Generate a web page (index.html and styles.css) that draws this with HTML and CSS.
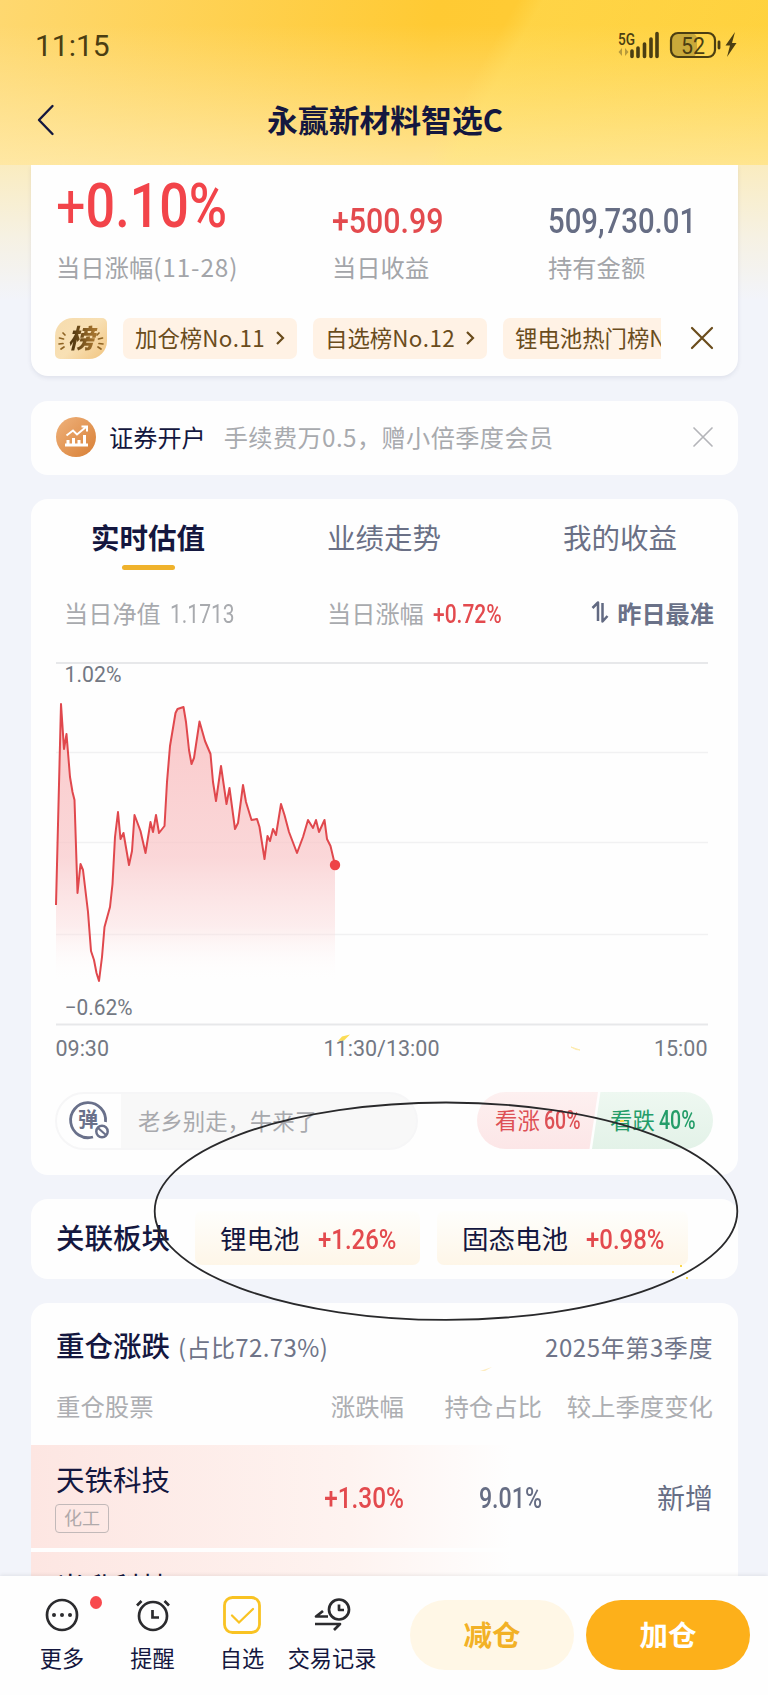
FILE: index.html
```html
<!DOCTYPE html>
<html lang="zh-CN">
<head>
    <meta charset="UTF-8">
    <meta name="viewport" content="width=device-width, initial-scale=1.0">
    <title>永赢新材料智选C</title>
    <link rel="stylesheet" href="styles.css">
</head>
<body>
    <header class="top">
        <div class="status-bar">
            <span class="clock">11:15</span>
            <svg class="status-icons" width="122" height="30" viewBox="0 0 122 30">
                <text x="0" y="14.500" class="net" textLength="17" lengthAdjust="spacingAndGlyphs">5G</text>
                <path d="M4 18v8l-3.500-4zM7 18v8l3.500-4z" fill="#b79a3c"/>
                <path d="M14 21v5.500M20 18v8.500M26.500 14v12.500M33 9v17.500M39 3.500v23" stroke="#4b3e12" stroke-width="3.600" stroke-linecap="round"/>
                <rect x="53" y="3" width="26" height="24" rx="6" fill="#c9a93a"/>
                <rect x="53" y="3" width="44" height="24" rx="7" fill="none" stroke="#4b3e12" stroke-width="2.200"/>
                <path d="M101 12v6" stroke="#4b3e12" stroke-width="2.800" stroke-linecap="round"/>
                <text x="63" y="23.500" class="bat" textLength="24" lengthAdjust="spacingAndGlyphs">52</text>
                <path d="M117 2l-9.500 13.500h4.500l-3 11.500 9.500-14h-4.500z" fill="#4b3e12"/>
            </svg>
        </div>
        <div class="nav">
            <svg class="back" width="18" height="32" viewBox="0 0 18 32"><path d="M15.500 2L2 16l13.500 14" fill="none" stroke="#14173f" stroke-width="2.400" stroke-linecap="round" stroke-linejoin="round"/></svg>
            <h1>永赢新材料智选C</h1>
        </div>
    </header>

    <main class="content">
        <section class="card summary">
            <div class="figures">
                <div class="figure">
                    <div class="value big red"><span class="num"><span class="sign">+</span>0.10%</span></div>
                    <div class="label">当日涨幅<span class="date">(11-28)</span></div>
                </div>
                <div class="figure">
                    <div class="value profit red"><span class="num">+500.99</span></div>
                    <div class="label">当日收益</div>
                </div>
                <div class="figure">
                    <div class="value slate"><span class="num">509,730.01</span></div>
                    <div class="label">持有金额</div>
                </div>
            </div>
            <div class="ranks">
                <div class="rank-logo">
                    <svg width="52" height="41" viewBox="0 0 52 41"><path d="M8 15l2 2M4.500 20l4 1M4 26l4-.500M6 31l3-2M44 15l-2 2M47.500 20l-4 1M48 26l-4-.500M46 31l-3-2" stroke="#8f6424" stroke-width="1.700" stroke-linecap="round"/></svg>
                    <span>榜</span>
                </div>
                <div class="rank-list">
                    <div class="rank">加仓榜<span class="no">No.11</span><svg width="10" height="16" viewBox="0 0 10 16"><path d="M2 2l6 6-6 6"/></svg></div>
                    <div class="rank">自选榜<span class="no">No.12</span><svg width="10" height="16" viewBox="0 0 10 16"><path d="M2 2l6 6-6 6"/></svg></div>
                    <div class="rank">锂电池热门榜No.1</div>
                </div>
                <svg class="close" width="24" height="24" viewBox="0 0 24 24"><path d="M2 2l20 20M22 2L2 22" stroke="#6a4c1c" stroke-width="2.200" stroke-linecap="round"/></svg>
            </div>
        </section>

        <section class="card promo">
            <svg width="40" height="40" viewBox="0 0 40 40">
                <defs><linearGradient id="coin" x1="0" y1="0" x2="1" y2="1"><stop offset="0" stop-color="#efb27c"/><stop offset="1" stop-color="#d87f35"/></linearGradient></defs>
                <circle cx="20" cy="20" r="20" fill="url(#coin)"/>
                <path d="M9 28h23M12 28v-5M17.500 28v-7M23 28v-5M28.500 28V18" stroke="#fff" stroke-width="3"/>
                <path d="M10.500 18.500l6.500-5 4 4 9-7.500M25.500 9.500H31v5" fill="none" stroke="#fff" stroke-width="2"/>
            </svg>
            <span class="promo-title">证券开户</span>
            <span class="promo-text">手续费万0.5，赠小倍季度会员</span>
            <svg class="close" width="20" height="20" viewBox="0 0 20 20"><path d="M1 1l18 18M19 1L1 19" stroke="#b4b5b9" stroke-width="1.700" stroke-linecap="round"/></svg>
        </section>

        <section class="card valuation">
            <div class="tabs">
                <div class="tab active">实时估值</div>
                <div class="tab">业绩走势</div>
                <div class="tab">我的收益</div>
            </div>
            <div class="quote">
                <div class="quote-item">当日净值<span class="num nav-value">1.1713</span></div>
                <div class="quote-item">当日涨幅<span class="num red">+0.72%</span></div>
                <div class="sort"><svg width="18" height="24" viewBox="0 0 18 24"><path d="M1.500 8L7 2.500V21M11.500 3v18.500L16.500 16" fill="none" stroke="#626a82" stroke-width="2.500" stroke-linejoin="round"/></svg>昨日最准</div>
            </div>
            <svg class="chart" width="653" height="364" viewBox="0 0 653 364">
                <defs>
                    <linearGradient id="area" x1="0" y1="0" x2="0" y2="1">
                        <stop offset="0" stop-color="#f9bcbd" stop-opacity=".8"/>
                        <stop offset=".55" stop-color="#f9c6c8" stop-opacity=".7"/>
                        <stop offset=".8" stop-color="#fbd5d6" stop-opacity=".42"/>
                        <stop offset="1" stop-color="#ffffff" stop-opacity="0"/>
                    </linearGradient>
                </defs>
                <path d="M0 1h652M0 362.500h652" stroke="#e7e8ea" stroke-width="2"/>
                <path d="M0 90.500h652M0 180.500h652M0 272.500h652" stroke="#f1f1f2" stroke-width="1.700"/>
                <path id="fill" fill="url(#area)"/>
                <path id="line" fill="none" stroke="#e0484d" stroke-width="2" stroke-linejoin="round"/>
                <circle id="dot" r="5.200" fill="#ee4347"/>
                <text x="8.500" y="20" textLength="57" lengthAdjust="spacingAndGlyphs">1.02%</text>
                <text x="8.500" y="352.500" textLength="68" lengthAdjust="spacingAndGlyphs">−0.62%</text>
            </svg>
            <div class="axis"><span>09:30</span><span>11:30/13:00</span><span>15:00</span></div>
            <div class="barrage">
                <div class="barrage-box">
                    <div class="barrage-switch">
                        <svg width="44" height="42" viewBox="0 0 44 42">
                            <path d="M38.500 22A17.500 17.500 0 1 0 26 37" fill="none" stroke="#69708a" stroke-width="2.800"/>
                            <text x="11" y="27" class="dan">弹</text>
                            <circle cx="35" cy="31.500" r="5.700" fill="#fff" stroke="#69708a" stroke-width="2.500"/>
                            <path d="M31 28l8 7" stroke="#69708a" stroke-width="2.200"/>
                        </svg>
                    </div>
                    <span class="barrage-text">老乡别走，牛来了</span>
                </div>
                <div class="votes">
                    <div class="vote up">看涨<span class="num">60%</span></div>
                    <div class="vote down">看跌<span class="num">40%</span></div>
                </div>
            </div>
        </section>

        <section class="card sectors">
            <h2>关联板块</h2>
            <div class="sector first">锂电池<span class="num red">+1.26%</span></div>
            <div class="sector second">固态电池<span class="num red">+0.98%</span></div>
        </section>

        <section class="card holdings">
            <div class="holdings-head">
                <h2>重仓涨跌</h2>
                <span class="share">(占比72.73%)</span>
                <span class="quarter">2025年第3季度</span>
            </div>
            <div class="row cols">
                <span>重仓股票</span><span>涨跌幅</span><span>持仓占比</span><span>较上季度变化</span>
            </div>
            <div class="row stock">
                <div><div class="name">天铁科技</div><div class="tag">化工</div></div>
                <span class="num red">+1.30%</span>
                <span class="num ratio slate">9.01%</span>
                <span class="change">新增</span>
            </div>
            <div class="row stock">
                <div><div class="name">当升科技</div></div>
            </div>
        </section>
    </main>

    <footer class="bottom">
        <div class="action more">
            <svg width="36" height="38" viewBox="0 0 36 38"><circle cx="18" cy="19" r="15" fill="none" stroke="#2b2b2e" stroke-width="2.700"/><g fill="#2b2b2e"><circle cx="10" cy="19" r="2"/><circle cx="18" cy="19" r="2"/><circle cx="26" cy="19" r="2"/></g></svg>
            <i class="badge"></i>
            <span>更多</span>
        </div>
        <div class="action remind">
            <svg width="36" height="38" viewBox="0 0 36 38"><g fill="none" stroke="#2b2b2e" stroke-width="2.700"><circle cx="18" cy="20" r="14"/><path d="M17.500 14v7.500H24M2 9.500l4.500-4.500M34 9.500l-4.500-4.500"/></g></svg>
            <span>提醒</span>
        </div>
        <div class="action fav">
            <svg width="38" height="38" viewBox="0 0 38 38"><g fill="none" stroke="#f9c323"><rect x="1.500" y="1.500" width="35" height="35" rx="8" stroke-width="2.800"/><path d="M9 19.500l7 7L30 13" stroke-width="2.300" stroke-linecap="round"/></g></svg>
            <span>自选</span>
        </div>
        <div class="action record">
            <svg width="38" height="38" viewBox="0 0 38 38"><g fill="none" stroke="#2b2b2e" stroke-width="2.700" stroke-linejoin="round"><circle cx="26" cy="13.500" r="10"/><path d="M26 8.500v5.500h5M15 20.500H3l7-5.500M2 28h25l-6 6"/></g></svg>
            <span>交易记录</span>
        </div>
        <button class="btn reduce">减仓</button>
        <button class="btn add">加仓</button>
    </footer>

    <!-- hand-drawn circle and confetti over the page -->
    <svg class="marks" width="768" height="1695" viewBox="0 0 768 1695">
        <ellipse cx="446" cy="1211.200" rx="291.300" ry="108.700" fill="none" stroke="#29292b" stroke-width="1.800"/>
        <path d="M338 1041l4-4.500 8-2-6 6z" fill="#fbdc55"/>
        <path d="M571 1047l9 3-4-.500z" stroke="#fdebae" fill="none"/>
        <path d="M480 1371l12-4-7 4z" fill="#fdecc0"/>
        <path d="M672 1271h2v2h-2zM680 1265h2v2h-2zM686 1277h2v2h-2zM620 1120h4v2h-4z" fill="#fbd84e"/>
    </svg>

    <script>
        const points = [
            [0, 243], [5, 42], [8, 87], [10.5, 72], [14, 115], [16.5, 130], [18.5, 138], [21.5, 231],
            [24.5, 202], [27, 208], [32, 250], [35, 289], [38, 298], [40.5, 311], [43, 319], [46, 295],
            [48.5, 265], [54, 245], [56.5, 222], [59, 175], [62, 150], [64.5, 177], [67.5, 171],
            [73, 203], [76, 189], [78.5, 153], [84.5, 169], [89.5, 191], [94.5, 160], [97, 170],
            [100, 153], [103, 171], [108.5, 164], [111, 120], [114, 84], [119.5, 51], [121.5, 47],
            [127.5, 45], [130, 60], [133, 88], [135.5, 102], [138, 96], [143.5, 59.5], [149, 79],
            [154.5, 92], [157, 120], [160, 139], [165, 104], [170.5, 142], [173.5, 126], [179, 167],
            [182, 161], [187, 123], [190, 140], [195.5, 158], [201, 157], [203.5, 165], [208.5, 197],
            [211.5, 174], [214, 179], [217, 167], [220, 173], [225, 142], [228.5, 153], [233, 170],
            [241, 191], [247, 175], [252, 158], [257, 166], [260, 158], [263, 170], [268.5, 158],
            [271, 177], [274.5, 184], [279, 203]
        ];
        const line = 'M' + points.map(p => p.join(' ')).join('L');
        const last = points[points.length - 1];
        document.getElementById('line').setAttribute('d', line);
        document.getElementById('fill').setAttribute('d', line + `L${last[0]} 320L0 320Z`);
        document.getElementById('dot').setAttribute('cx', last[0]);
        document.getElementById('dot').setAttribute('cy', last[1]);
    </script>
</body>
</html>
```
FILE: styles.css
```css
* {
    box-sizing: border-box;
}
body {
    position: relative;
    margin: 0;
    width: 768px;
    height: 1695px;
    overflow: hidden;
    display: flex;
    flex-direction: column;
    font-family: 'Noto Sans CJK SC', sans-serif;
    color: #14173f;
    background: #f2f4fa;
}
h1, h2 {
    margin: 0;
}
svg {
    display: block;
    flex: none;
    overflow: visible;
}
.top {
    flex: none;
    height: 165px;
    background:
        linear-gradient(120deg, transparent 60%, rgba(255, 236, 120, 0.26) 63%, rgba(255, 225, 90, 0.1) 100%),
        linear-gradient(to bottom, transparent 15%, rgba(255, 238, 185, 0.72)),
        linear-gradient(100deg, #fed870, #ffca33 55%, #ffcf38);
}
.status-bar {
    display: flex;
    justify-content: space-between;
    height: 90px;
    padding: 30px 28px 0 36px;
}
.clock {
    font-family: Roboto, sans-serif;
    font-size: 30px;
    line-height: 32px;
    margin-left: -1px;
    color: #4b3e12;
}
.net {
    font: 500 17px Roboto, sans-serif;
    fill: #4b3e12;
}
.bat {
    font: 400 23px Roboto, sans-serif;
    fill: #4b3e12;
}
.nav {
    display: flex;
    align-items: center;
    height: 59px;
    padding: 0 37px;
}
.nav h1 {
    flex: 1;
    margin-right: 16px;
    padding-bottom: 2px;
    text-align: center;
    font-size: 30.8px;
    font-weight: 700;
    line-height: 44px;
}
.content {
    flex: 1;
    min-height: 0;
    overflow: hidden;
    display: flex;
    flex-direction: column;
    padding: 0 30px 0 31px;
    background: linear-gradient(to bottom, #faecc0, #f6f1e2 70px, #f2f4fa 135px);
}
.card {
    flex: none;
    background: #fefefe;
    border-radius: 17px;
    margin-bottom: 24px;
}
.red {
    color: #e34a4e;
}
.slate {
    color: #666d84;
}
.num {
    display: inline-block;
    font-family: Roboto, sans-serif;
    font-weight: 500;
    transform: scaleX(0.84);
    transform-origin: left;
    white-space: nowrap;
}

.card.summary {
    height: 211px;
    margin-bottom: 25px;
    border-radius: 0 0 17px 17px;
    box-shadow: 0 2px 4px rgba(60, 70, 110, 0.1);
}
.figures {
    display: grid;
    grid-template-columns: 276px 216px 1fr;
    padding: 6px 0 0 25px;
    height: 147px;
}
.value {
    height: 77px;
    font-size: 34.5px;
    line-height: 94px;
}
.value .num {
    transform: scaleX(0.85);
}
.value.profit .num {
    transform: scaleX(0.88);
}
.value.big {
    font-size: 62px;
    line-height: 58px;
    color: #f2444a;
}
.value.big .num {
    transform: scaleX(0.84);
}
.sign {
    font-weight: 400;
}
.label {
    font-size: 24.3px;
    line-height: 36px;
    margin-top: 1px;
    color: #a3a5a9;
}
.date {
    letter-spacing: 0.9px;
}
.ranks {
    display: flex;
    align-items: center;
    padding-left: 24px;
    height: 52px;
}
.rank-logo {
    display: grid;
    width: 52px;
    height: 41px;
    border-radius: 18px 5px 18px 5px;
    background: linear-gradient(135deg, #f6dcae, #f8e0b4 50%, #f1c47f);
}
.rank-logo svg,
.rank-logo span {
    grid-area: 1 / 1;
}
.rank-logo span {
    text-align: center;
    font-size: 26px;
    line-height: 37px;
    font-weight: 900;
    font-style: italic;
    color: transparent;
    background: linear-gradient(90deg, #553a10 35%, #a5742e 75%);
    background-clip: text;
    -webkit-background-clip: text;
}
.rank-list {
    display: flex;
    gap: 16px;
    width: 538px;
    margin-left: 16px;
    overflow: hidden;
}
.rank {
    flex: none;
    display: flex;
    align-items: center;
    width: 174px;
    height: 41px;
    padding: 0 0 2px 12px;
    border-radius: 7px;
    font-size: 22.4px;
    white-space: nowrap;
    color: #6a4c1c;
    background: #fff2e5;
}
.no {
    letter-spacing: 0.5px;
}
.rank svg {
    margin: 2px 0 0 10px;
    fill: none;
    stroke: #6a4c1c;
    stroke-width: 2.2;
}
.ranks .close {
    margin-left: 29px;
}

.promo {
    display: flex;
    align-items: center;
    height: 74px;
    padding: 0 25px 2px 25px;
    font-size: 24.2px;
}
.promo span {
    margin-top: -1px;
}
.promo-title {
    margin-left: 13px;
    color: #14173f;
}
.promo-text {
    margin-left: 18px;
    letter-spacing: 0.4px;
    color: #a8aaae;
}
.promo .close {
    margin-left: auto;
}

.valuation {
    height: 676px;
}
.tabs {
    display: grid;
    grid-template-columns: repeat(3, 236px);
    height: 71px;
    margin-left: -1px;
    padding-top: 17px;
}
.tab {
    display: flex;
    flex-direction: column;
    align-items: center;
    font-size: 28.5px;
    line-height: 42px;
    color: #6a7086;
}
.tab.active {
    font-weight: 700;
    color: #14173f;
}
.tab.active::after {
    content: "";
    width: 53px;
    height: 4.5px;
    margin-top: 7px;
    border-radius: 3px;
    background: #efb22c;
}
.quote {
    display: grid;
    grid-template-columns: 263px 262px 1fr;
    align-items: center;
    height: 48px;
    margin-top: 18px;
    padding: 0 24px 0 33px;
    font-size: 24.2px;
    color: #a8aaae;
}
.quote .num {
    margin-left: 9px;
    font-size: 25px;
}
.quote .nav-value {
    font-weight: 400;
}
.sort {
    display: flex;
    align-items: center;
    justify-content: flex-end;
    gap: 8px;
    font-weight: 700;
    color: #6a7188;
}
.chart {
    margin: 26px 0 0 24.5px;
}
.chart text,
.axis {
    font-family: Roboto, sans-serif;
    font-size: 21.5px;
    fill: #737883;
    color: #737883;
}
.axis {
    display: flex;
    justify-content: space-between;
    width: 652px;
    margin: 8px 0 0 24.5px;
    line-height: 30px;
}
.barrage {
    display: flex;
    justify-content: space-between;
    margin: 28px 25px 0 24px;
}
.barrage-box {
    display: flex;
    align-items: center;
    width: 363px;
    height: 58px;
    border: 2px solid #f6f6f7;
    border-radius: 29px;
    overflow: hidden;
    font-size: 22.4px;
    color: #a8a9ad;
    background: #f8f8f8;
}
.barrage-switch {
    width: 64px;
    height: 56px;
    padding: 7px 0 0 10px;
    margin-right: 17px;
    background: #fefefe;
}
.barrage-text {
    padding-bottom: 3px;
}
.dan {
    font: 700 20px 'Noto Sans CJK SC', sans-serif;
    fill: #69708a;
}
.votes {
    display: flex;
    height: 57px;
    border-radius: 29px;
    overflow: hidden;
}
.vote {
    width: 121px;
    padding-left: 18px;
    font-size: 22.4px;
    line-height: 54px;
    white-space: nowrap;
}
.vote .num {
    margin-left: 4px;
    font-size: 25px;
    transform: scaleX(0.78);
}
.up {
    color: #dd5055;
    background: linear-gradient(#fdf0f0, #fce6e7);
    clip-path: polygon(0 0, 100% 0, 93% 100%, 0 100%);
}
.down {
    margin-left: -6px;
    padding-left: 18px;
    color: #249d69;
    background: linear-gradient(#eef8f1, #e3f2e8);
    clip-path: polygon(7% 0, 100% 0, 100% 100%, 0 100%);
}

.sectors {
    display: flex;
    height: 80px;
    padding-left: 25px;
}
h2 {
    font-size: 28.5px;
    font-weight: 500;
    line-height: 42px;
}
.sectors h2 {
    width: 139px;
    padding-top: 17px;
}
.sector {
    height: 54px;
    margin-top: 12px;
    padding-left: 25px;
    border-radius: 7px;
    font-size: 26.5px;
    line-height: 53px;
    white-space: nowrap;
    background: linear-gradient(#fefefc, #fef6e8);
}
.sector .num {
    margin-left: 18px;
    font-size: 28.5px;
}
.first {
    width: 225px;
    margin-right: 17px;
}
.second {
    width: 251px;
}

.holdings {
    height: 400px;
    padding-top: 21px;
}
.holdings-head {
    display: flex;
    align-items: baseline;
    height: 42px;
    padding: 0 25px;
    font-size: 24px;
    color: #6f7488;
}
.holdings-head h2 {
    color: #14173f;
}
.share {
    margin-left: 8px;
    letter-spacing: 0.4px;
}
.quarter {
    margin-left: auto;
    letter-spacing: 0.6px;
}
.row {
    display: grid;
    grid-template-columns: 1fr 150px 138px 171px;
    padding: 0 25px;
    text-align: right;
}
.row > :first-child {
    text-align: left;
}
.cols {
    height: 79px;
    padding-top: 22px;
    font-size: 24.4px;
    line-height: 36px;
    color: #adaeb2;
}
.stock {
    height: 103px;
    margin-bottom: 4px;
    background: linear-gradient(90deg, #fde6e2, #fef3f0 45%, #fefefe 68%);
}
.stock .num {
    transform-origin: right;
    font-size: 29px;
    line-height: 106px;
}
.stock .ratio {
    transform: scaleX(0.8);
}
.name {
    padding-top: 13px;
    font-size: 28.5px;
    line-height: 42px;
}
.tag {
    width: 54px;
    height: 29px;
    margin: 4px 0 0 -1px;
    border: 1.5px solid #c2b9b9;
    border-radius: 4px;
    text-align: center;
    font-size: 18px;
    line-height: 25px;
    color: #b0a9aa;
}
.change {
    font-size: 28px;
    line-height: 104px;
    color: #666d84;
}

.bottom {
    flex: none;
    display: flex;
    height: 119px;
    background: #fefefe;
    box-shadow: 0 -1px 4px rgba(0, 0, 0, 0.08);
    z-index: 1;
}
.action {
    position: relative;
    display: flex;
    flex-direction: column;
    align-items: center;
    padding-top: 20px;
    font-size: 22.2px;
    line-height: 32px;
    white-space: nowrap;
}
.action span {
    margin-top: 7px;
}
.more {
    width: 90px;
    margin-left: 17px;
}
.remind {
    width: 91px;
}
.fav {
    width: 88px;
}
.record {
    width: 92px;
}
.badge {
    position: absolute;
    left: 73px;
    top: 20px;
    width: 12px;
    height: 13px;
    border-radius: 50%;
    background: #f84a4e;
}
.btn {
    width: 164px;
    height: 70px;
    margin: 24px 0 0;
    padding: 0 0 3px;
    border: none;
    border-radius: 35px;
    font-family: inherit;
    font-size: 28.5px;
    font-weight: 700;
}
.reduce {
    margin-left: 32px;
    color: #f2b126;
    background: #fff7e6;
}
.add {
    margin-left: 12px;
    color: #fff;
    background: #fdb01a;
}
.marks {
    position: absolute;
    left: 0;
    top: 0;
    z-index: 2;
    pointer-events: none;
}
```
